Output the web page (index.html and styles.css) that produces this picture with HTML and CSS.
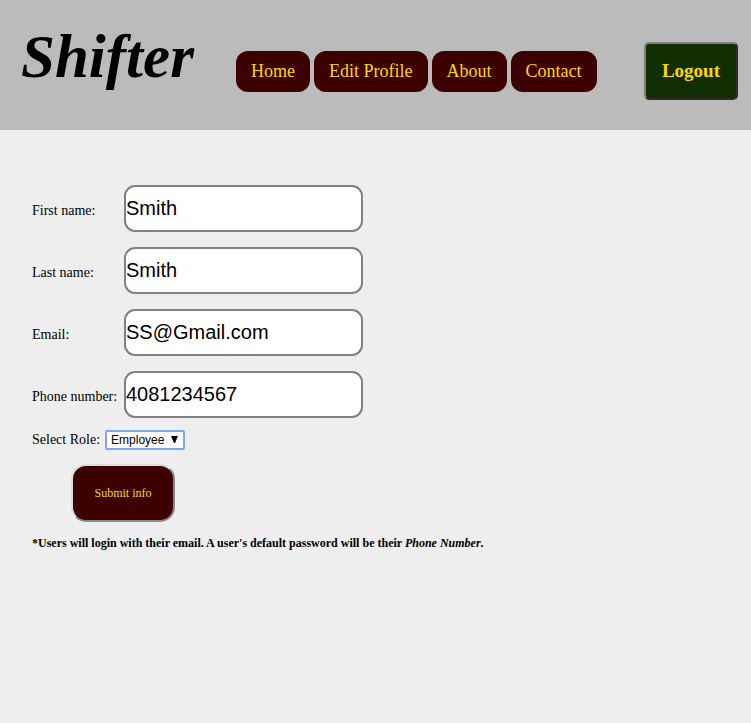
FILE: index.html
```html
<!DOCTYPE html>
<html lang="en">
<head>
<meta charset="utf-8">
<title>Shifter</title>
<link rel="stylesheet" href="styles.css">
</head>
<body>
<header class="header">
  <h1 class="logo">Shifter</h1>
  <nav class="nav">
    <a href="#">Home</a>
    <a href="#">Edit Profile</a>
    <a href="#">About</a>
    <a href="#">Contact</a>
  </nav>
  <button class="logout" type="button">Logout</button>
</header>
<main class="main">
  <form>
    <div class="fields">
      <label for="first">First name:</label>
      <input id="first" type="text" value="Smith">
      <label for="last">Last name:</label>
      <input id="last" type="text" value="Smith">
      <label for="email">Email:</label>
      <input id="email" type="text" value="SS@Gmail.com">
      <label for="phone">Phone number:</label>
      <input id="phone" type="text" value="4081234567">
    </div>
    <div class="role">
      <label for="role">Select Role:</label>
      <span class="select">
        <select id="role"><option>Employee</option></select>
        <svg class="arrow" viewBox="0 0 7 7" aria-hidden="true"><path d="M0 0h7L4 7H3z"/></svg>
      </span>
    </div>
    <button class="submit" type="submit">Submit info</button>
  </form>
  <p class="note">*Users will login with their email. A user's default password will be their <em>Phone Number</em>.</p>
</main>
</body>
</html>
```

FILE: styles.css
```css
* {
  box-sizing: border-box;
}

body {
  margin: 0;
  background: #eee;
  color: #000;
  font-family: "Liberation Serif", "Times New Roman", serif;
  font-size: 14px;
}

.header {
  display: flex;
  align-items: center;
  height: 130px;
  padding: 0 13px 0 21px;
  background: #bbb;
}

.logo {
  width: 215px;
  margin: 0;
  padding-bottom: 16px;
  font-size: 61px;
  font-style: italic;
  line-height: 68px;
}

.nav {
  display: flex;
  gap: 4px;
  margin-top: 12px;
}

.nav a {
  padding: 10px 15px;
  border-radius: 12px;
  background: #3c0000;
  color: #ffd700;
  font-size: 18px;
  line-height: 21px;
  text-decoration: none;
  white-space: nowrap;
}

.logout {
  height: 58px;
  margin: 12px 0 0 auto;
  padding: 0 16px;
  border: 2px solid;
  border-color: #808080 #2c2c2c #2c2c2c #808080;
  border-radius: 5px;
  background: #112e00;
  color: #ffd700;
  font: bold 19px "Liberation Serif", "Times New Roman", serif;
}

.main {
  padding: 55px 32px;
}

.fields {
  display: grid;
  grid-template-columns: 92px 239px;
  row-gap: 15px;
  align-items: center;
}

.fields label {
  padding-top: 4px;
  white-space: nowrap;
}

.fields input {
  width: 100%;
  height: 47px;
  padding: 0;
  border: 2px solid #808080;
  border-radius: 11px;
  background: #fff;
  color: #000;
  font: 20px "Liberation Sans", Arial, sans-serif;
}

.role {
  display: flex;
  align-items: center;
  gap: 5px;
  margin-top: 12px;
}

.select {
  position: relative;
  display: block;
}

.select select {
  display: block;
  width: 80px;
  height: 20px;
  padding: 0 4px;
  border: 2px solid #7da7ea;
  border-radius: 2px;
  background: #fff;
  color: #000;
  font: 12px "Liberation Sans", Arial, sans-serif;
  appearance: none;
}

.arrow {
  position: absolute;
  top: 6px;
  right: 7px;
  width: 7px;
  height: 7px;
  pointer-events: none;
}

.submit {
  display: block;
  width: 104px;
  height: 58px;
  margin: 14px 0 0 39px;
  border: 2px solid;
  border-color: #ddd #888 #888 #ddd;
  border-radius: 15px;
  background: #3c0000;
  color: #ffd700;
  font: 12px "Liberation Serif", "Times New Roman", serif;
}

.note {
  margin: 14px 0 0;
  font-size: 12px;
  font-weight: bold;
  line-height: 14px;
}
```
